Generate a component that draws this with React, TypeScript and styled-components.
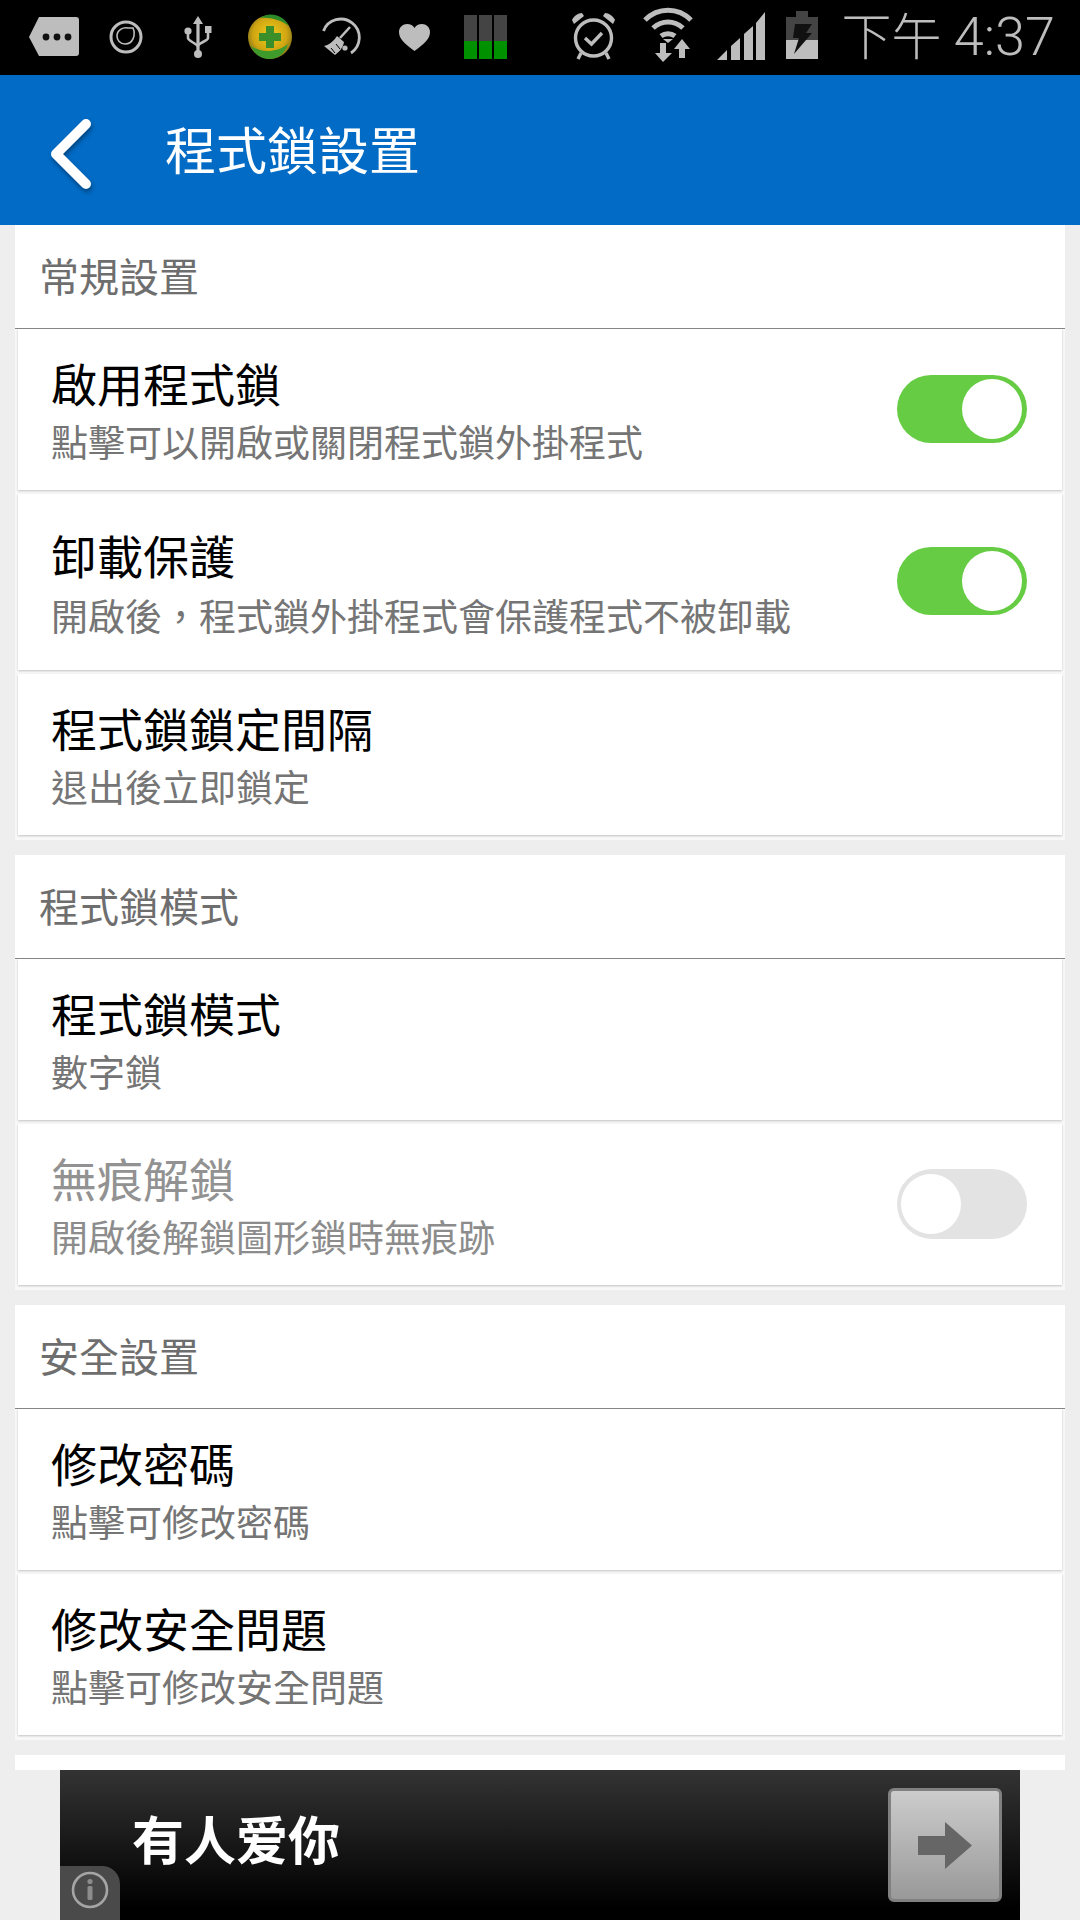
import React from 'react';
import styled, { createGlobalStyle } from 'styled-components';

const GlobalStyle = createGlobalStyle`
  html,
  body {
    margin: 0;
    padding: 0;
    background: #eeeeee;
  }

  * {
    box-sizing: border-box;
  }
`;

type RowData = {
  title: string;
  sub: string;
  toggle?: 'on' | 'off';
  disabled?: boolean;
  tall?: boolean;
};

type SectionData = {
  heading: string;
  rows: RowData[];
};

const sections: SectionData[] = [
  {
    heading: '常規設置',
    rows: [
      { title: '啟用程式鎖', sub: '點擊可以開啟或關閉程式鎖外掛程式', toggle: 'on' },
      { title: '卸載保護', sub: '開啟後\uFF0C程式鎖外掛程式會保護程式不被卸載', toggle: 'on', tall: true },
      { title: '程式鎖鎖定間隔', sub: '退出後立即鎖定' },
    ],
  },
  {
    heading: '程式鎖模式',
    rows: [
      { title: '程式鎖模式', sub: '數字鎖' },
      { title: '無痕解鎖', sub: '開啟後解鎖圖形鎖時無痕跡', toggle: 'off', disabled: true },
    ],
  },
  {
    heading: '安全設置',
    rows: [
      { title: '修改密碼', sub: '點擊可修改密碼' },
      { title: '修改安全問題', sub: '點擊可修改安全問題' },
    ],
  },
];

const TagIcon = () => (
  <StatusGlyph width="50" height="75" viewBox="0 0 50 75" $after={30}>
    <path d="M10 17H47a3 3 0 0 1 3 3V53a3 3 0 0 1-3 3H10L0 37Z" fill="#bdbdbd" />
    <circle cx="17" cy="37" r="3.4" fill="#111" />
    <circle cx="28" cy="37" r="3.4" fill="#111" />
    <circle cx="39" cy="37" r="3.4" fill="#111" />
  </StatusGlyph>
);

const RingIcon = () => (
  <StatusGlyph width="34" height="75" viewBox="0 0 34 75" $after={41}>
    <circle cx="17" cy="37" r="15" fill="none" stroke="#bdbdbd" strokeWidth="3" />
    <path d="M24 28c3 7 0 16-8 16-5 0-8-4-8-8 0-6 6-9 11-8 2 0 4 0 5 0Z" fill="none" stroke="#bdbdbd" strokeWidth="1.6" />
  </StatusGlyph>
);

const UsbIcon = () => (
  <StatusGlyph width="28" height="75" viewBox="0 0 28 75" $after={36}>
    <path d="M14 16l5 8h-3.4v28h-3.2V24H9Z" fill="#bdbdbd" />
    <circle cx="14" cy="54" r="4" fill="#bdbdbd" />
    <circle cx="4" cy="31" r="3.6" fill="#bdbdbd" />
    <rect x="21" y="26" width="6.5" height="7" fill="#bdbdbd" />
    <path d="M4 33v5c0 3 10 6 10 9M24 33v5c0 3-10 5-10 8" fill="none" stroke="#bdbdbd" strokeWidth="2.6" />
  </StatusGlyph>
);

const GuardIcon = () => (
  <StatusGlyph width="44" height="75" viewBox="0 0 44 75" $after={30}>
    <defs>
      <radialGradient id="guardFill" cx="50%" cy="45%" r="55%">
        <stop offset="0%" stopColor="#f0cf1c" />
        <stop offset="70%" stopColor="#d0a512" />
        <stop offset="100%" stopColor="#86761a" />
      </radialGradient>
    </defs>
    <circle cx="22" cy="37" r="22" fill="url(#guardFill)" />
    <path d="M12 18c8-6 22-5 29 8-8-6-19-9-29-8Z" fill="#2d8a2a" />
    <path d="M3 46c8 6 24 8 37-2-3 10-11 15-18 15-9 0-16-5-19-13Z" fill="#3f9a2c" />
    <path d="M18 26h8v7h7v8h-7v7h-8v-7h-7v-8h7Z" fill="#3a8f2a" />
  </StatusGlyph>
);

const BroomIcon = () => (
  <StatusGlyph width="39" height="75" viewBox="0 0 39 75" $after={38}>
    <path d="M1.500 31A18.500 18.500 0 1 1 29 53" fill="none" stroke="#bdbdbd" strokeWidth="2.8" />
    <path d="M28 27L18 38" stroke="#bdbdbd" strokeWidth="2.6" />
    <path d="M15 36l7 6c-1 6-5 10-9 13L2 46c5-1 10-5 13-10Z" fill="#bdbdbd" />
    <path d="M9 48l4 5M14 44l4 5" stroke="#000" strokeWidth="1" />
    <circle cx="23" cy="48" r="2.600" fill="#bdbdbd" />
  </StatusGlyph>
);

const HeartIcon = () => (
  <StatusGlyph width="31" height="75" viewBox="0 0 31 75" $after={34}>
    <path d="M15.500 51C6 44 0 39 0 32c0-5 4-8 8-8 3.500 0 6 1.500 7.500 4 1.500-2.500 4-4 7.500-4 4 0 8 3 8 8 0 7-6 12-15.500 19Z" fill="#bdbdbd" />
  </StatusGlyph>
);

const BarsIcon = () => (
  <StatusGlyph width="44" height="75" viewBox="0 0 44 75">
    {[0, 15, 30].map(x => (
      <g key={x}>
        <rect x={x} y="15" width="13" height="26" fill="#444444" />
        <rect x={x} y="41" width="13" height="18" fill="#009100" />
      </g>
    ))}
  </StatusGlyph>
);

const AlarmIcon = () => (
  <StatusGlyph width="45" height="75" viewBox="0 0 45 75" $after={27}>
    <circle cx="22.500" cy="38" r="18" fill="none" stroke="#bdbdbd" strokeWidth="3.4" />
    <path d="M14 38l6.500 6L31 33" fill="none" stroke="#bdbdbd" strokeWidth="3.4" />
    <path d="M1 20c2-4 6-7 10-7l2 3-10 8ZM44 20c-2-4-6-7-10-7l-2 3 10 8Z" fill="#bdbdbd" />
    <path d="M10 53l-3 6M35 53l3 6" stroke="#bdbdbd" strokeWidth="3.4" />
  </StatusGlyph>
);

const WifiIcon = () => (
  <StatusGlyph width="50" height="75" viewBox="0 0 50 75" $after={24}>
    <path d="M2 20C15 7 35 7 48 20" fill="none" stroke="#bdbdbd" strokeWidth="5" />
    <path d="M10 28c9-8 21-8 30 0" fill="none" stroke="#bdbdbd" strokeWidth="5" />
    <path d="M18 36c4-3 10-3 14 0" fill="none" stroke="#bdbdbd" strokeWidth="5" />
    <path d="M20 39h10l-5 4Z" fill="#bdbdbd" />
    <path d="M17 43h6v10h6l-9 9-8-9h5Z" fill="#bdbdbd" />
    <path d="M39 39l8 10h-5v9h-6v-9h-5Z" fill="#bdbdbd" />
  </StatusGlyph>
);

const SignalIcon = () => (
  <StatusGlyph width="48" height="75" viewBox="0 0 48 75" $after={21}>
    <path d="M0 60L10 50V60ZM14 60V46L23 38V60ZM27 60V34L36 26V60ZM39 60V23L48 12V60Z" fill="#bdbdbd" />
  </StatusGlyph>
);

const BatteryIcon = () => (
  <StatusGlyph width="32" height="75" viewBox="0 0 32 75" $after={24}>
    <path d="M10 11H22V17H32V40H0V17H10Z" fill="#444444" />
    <rect x="0" y="40" width="32" height="19" fill="#bdbdbd" />
    <path d="M9 24H26L20 33H26L8 54L13 38H7Z" fill="#111111" />
  </StatusGlyph>
);

const BackIcon = () => (
  <BackGlyph width="44" height="76" viewBox="0 0 44 76">
    <path d="M36 7L6 37L36 67" fill="none" stroke="#ffffff" strokeWidth="10" strokeLinecap="round" strokeLinejoin="round" />
  </BackGlyph>
);

const ArrowIcon = () => (
  <svg width="54" height="47" viewBox="0 0 54 47">
    <path d="M0 14H27V0L54 23.500L27 47V33H0Z" fill="#666666" />
  </svg>
);

const InfoIcon = () => (
  <svg width="38" height="38" viewBox="0 0 38 38">
    <circle cx="19" cy="19" r="17" fill="none" stroke="#a5a5a5" strokeWidth="2.6" />
    <circle cx="19" cy="10.500" r="2.600" fill="#8c8c8c" />
    <rect x="16.500" y="15" width="5" height="14" rx="1.500" fill="#8c8c8c" />
  </svg>
);

const SettingRow = ({ title, sub, toggle, disabled, tall }: RowData) => (
  <Row $tall={tall}>
    <RowText $tall={tall}>
      <RowTitle $disabled={disabled}>{title}</RowTitle>
      <RowSub $disabled={disabled} $tall={tall}>
        {sub}
      </RowSub>
    </RowText>
    {toggle && (
      <Toggle $on={toggle === 'on'}>
        <Knob />
      </Toggle>
    )}
  </Row>
);

const App = () => {
  return (
    <Page>
      <GlobalStyle />
      <StatusBar>
        <IconGroup>
          <TagIcon />
          <RingIcon />
          <UsbIcon />
          <GuardIcon />
          <BroomIcon />
          <HeartIcon />
          <BarsIcon />
        </IconGroup>
        <IconGroup>
          <AlarmIcon />
          <WifiIcon />
          <SignalIcon />
          <BatteryIcon />
          <Clock>
            下午 <ClockDigits>4:37</ClockDigits>
          </Clock>
        </IconGroup>
      </StatusBar>
      <Header>
        <BackIcon />
        <HeaderTitle>程式鎖設置</HeaderTitle>
      </Header>
      {sections.map(section => (
        <Section key={section.heading}>
          <SectionHeading>{section.heading}</SectionHeading>
          {section.rows.map(row => (
            <SettingRow key={row.title} {...row} />
          ))}
        </Section>
      ))}
      <Strip />
      <Ad>
        <AdText>有人爱你</AdText>
        <AdButton>
          <ArrowIcon />
        </AdButton>
        <InfoTab>
          <InfoIcon />
        </InfoTab>
      </Ad>
    </Page>
  );
};

const Page = styled.div`
  width: 1080px;
  height: 1920px;
  overflow: hidden;
  background: #eeeeee;
  font-family: 'Noto Sans CJK TC', 'Noto Sans', sans-serif;
`;

const StatusBar = styled.div`
  height: 75px;
  padding: 0 25px 0 29px;
  background: #000000;
  display: flex;
  justify-content: space-between;
`;

const IconGroup = styled.div`
  display: flex;
`;

const StatusGlyph = styled.svg<{ $after?: number }>`
  display: block;
  flex: none;
  margin-right: ${props => props.$after || 0}px;
`;

const Clock = styled.div`
  color: #bdbdbd;
  font-family: Roboto, 'Noto Sans CJK TC', sans-serif;
  font-size: 50px;
  font-weight: 300;
  line-height: 74px;
  white-space: nowrap;
`;

const ClockDigits = styled.span`
  font-size: 54px;
`;

const Header = styled.div`
  height: 150px;
  padding-left: 50px;
  background: #016bc5;
  display: flex;
  align-items: center;
`;

const BackGlyph = styled.svg`
  display: block;
  flex: none;
  margin-top: 9px;
  filter: drop-shadow(1px 3px 2px rgba(0, 0, 0, 0.35));
`;

const HeaderTitle = styled.div`
  margin-left: 71px;
  margin-bottom: 5px;
  color: #ffffff;
  font-size: 51px;
  line-height: 60px;
`;

const Section = styled.div`
  margin: 0 15px 15px;
  padding-bottom: 5px;
  background: #f8f8f8;
`;

const SectionHeading = styled.div`
  height: 104px;
  padding: 21px 0 0 24px;
  background: #ffffff;
  border-bottom: 1px solid #888888;
  color: #6e6e6e;
  font-size: 40px;
  line-height: 58px;
`;

const Row = styled.div<{ $tall?: boolean }>`
  height: ${props => (props.$tall ? 176 : 161)}px;
  margin: 0 3px 4px;
  padding: 0 35px 0 33px;
  background: #ffffff;
  box-shadow: 0 1px 2px rgba(0, 0, 0, 0.22);
  display: flex;
  justify-content: space-between;
  align-items: flex-start;

  &:last-child {
    margin-bottom: 0;
  }
`;

const RowText = styled.div<{ $tall?: boolean }>`
  padding-top: ${props => (props.$tall ? 30 : 23)}px;
  display: flex;
  flex-direction: column;
`;

const RowTitle = styled.div<{ $disabled?: boolean }>`
  color: ${props => (props.$disabled ? '#929292' : '#000000')};
  font-size: 46px;
  line-height: 60px;
`;

const RowSub = styled.div<{ $disabled?: boolean; $tall?: boolean }>`
  margin-top: ${props => (props.$tall ? 2 : 0)}px;
  color: ${props => (props.$disabled ? '#8c8c8c' : '#757575')};
  font-size: 37px;
  line-height: 58px;
`;

const Toggle = styled.div<{ $on: boolean }>`
  width: 130px;
  height: ${props => (props.$on ? 68 : 70)}px;
  align-self: center;
  margin-bottom: 2px;
  padding: ${props => (props.$on ? '4px 5px' : '5px 4px')};
  border-radius: 35px;
  background: ${props => (props.$on ? '#66cc44' : '#e3e3e3')};
  display: flex;
  justify-content: ${props => (props.$on ? 'flex-end' : 'flex-start')};
`;

const Knob = styled.div`
  width: 60px;
  height: 60px;
  border-radius: 50%;
  background: #ffffff;
`;

const Strip = styled.div`
  height: 15px;
  margin: 0 15px;
  background: #ffffff;
`;

const Ad = styled.div`
  position: relative;
  width: 960px;
  height: 150px;
  margin: 0 auto;
  padding: 18px 18px 0 72px;
  background: linear-gradient(to bottom, #333333, #000000 92%);
  display: flex;
  justify-content: space-between;
  align-items: flex-start;
`;

const AdText = styled.div`
  margin-top: 20px;
  color: #ffffff;
  font-family: 'Noto Sans CJK SC', sans-serif;
  font-size: 52px;
  font-weight: 700;
  line-height: 60px;
`;

const AdButton = styled.div`
  width: 114px;
  height: 114px;
  border: 3px solid #808080;
  border-radius: 6px;
  background: linear-gradient(to bottom, #cccccc, #999999);
  display: flex;
  align-items: center;
  justify-content: center;
`;

const InfoTab = styled.div`
  position: absolute;
  left: 0;
  bottom: 0;
  width: 60px;
  height: 54px;
  padding-top: 5px;
  border-top-right-radius: 18px;
  background: #4a4a4a;
  display: flex;
  justify-content: center;
  align-items: flex-start;
`;

export default App;
